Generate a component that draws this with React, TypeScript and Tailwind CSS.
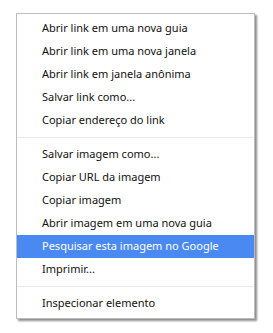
const groups: string[][] = [
  [
    "Abrir link em uma nova guia",
    "Abrir link em uma nova janela",
    "Abrir link em janela anônima",
    "Salvar link como...",
    "Copiar endereço do link",
  ],
  [
    "Salvar imagem como...",
    "Copiar URL da imagem",
    "Copiar imagem",
    "Abrir imagem em uma nova guia",
    "Pesquisar esta imagem no Google",
    "Imprimir...",
  ],
  ["Inspecionar elemento"],
];

const active = "Pesquisar esta imagem no Google";

export default function App() {
  return (
    <div className="h-[333px] w-[273px] bg-white pl-4 pt-[13px] font-['Noto_Sans',sans-serif]">
      <div className="w-[239px] border border-[#bcbcbc] bg-white py-[3px] shadow-[2px_2px_2px_rgba(0,0,0,0.45)]">
        {groups.map((items, gi) => (
          <div key={gi}>
            {gi > 0 && <div className="my-[5px] h-px bg-[#e9e9e9]" />}
            {items.map((label) => (
              <div
                key={label}
                className={
                  "flex h-[23px] items-center pl-[25px] text-[11px] " +
                  (label === active ? "bg-[#4a89f2] text-white" : "text-[#111]")
                }
              >
                {label}
              </div>
            ))}
          </div>
        ))}
      </div>
    </div>
  );
}
